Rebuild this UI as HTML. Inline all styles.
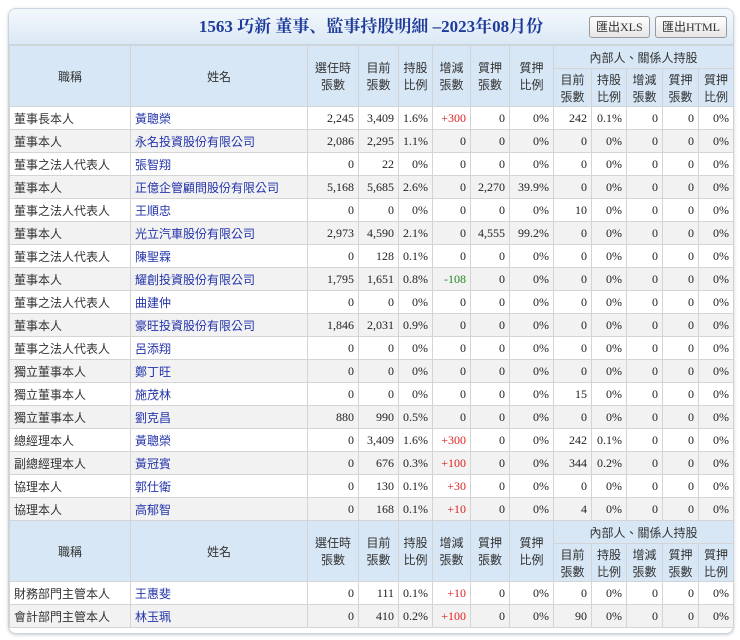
<!DOCTYPE html>
<html><head><meta charset="utf-8"><style>
body{margin:0;background:#fff;width:740px;height:640px;overflow:hidden;font-family:"Liberation Serif","Noto Sans CJK TC",serif;}
.panel{position:absolute;left:8px;top:8px;width:724px;height:624px;border:1px solid #c8d4e0;border-radius:8px;overflow:hidden;box-shadow:0 1px 3px #ccc;}
.title{height:35px;background:linear-gradient(#f4f8fc,#dae8f5);position:relative;border-bottom:1px solid #c8d4e0}
.title h1{margin:0;text-align:center;font-size:17px;line-height:35px;color:#1f3c9a;font-weight:bold;font-family:"Liberation Serif","Noto Serif CJK SC",serif;}
.btn{position:absolute;top:7px;height:20px;border:1px solid #999;border-radius:3px;background:linear-gradient(#fff,#e6e6e6);font-size:12px;line-height:20px;padding:0 6px;color:#333;font-family:"Liberation Serif","Noto Sans CJK TC",serif}
table{border-collapse:collapse;width:724px;table-layout:fixed;font-size:12px}
td,th{border:1px solid #d4d4d4;padding:0 4px;height:22px;white-space:nowrap;overflow:hidden}
th{background:#d7e7f5;font-weight:normal;color:#333;font-family:"Noto Sans CJK TC",sans-serif;font-size:12px;line-height:17px;text-align:center;padding:0 2px}
td{text-align:right;color:#222}
td.t{text-align:left;font-family:"Noto Sans CJK TC",sans-serif;color:#333}
td.n{text-align:left;font-family:"Noto Sans CJK TC",sans-serif;color:#2233aa}
tr.g td{background:#f2f2f2}
.r{color:#d22}.gr{color:#282}
</style></head><body>
<div class="panel">
<div class="title"><h1>1563 巧新 董事、監事持股明細 –2023年08月份</h1>
<span class="btn" style="left:580px">匯出XLS</span><span class="btn" style="left:646px">匯出HTML</span></div>
<table>
<colgroup><col style="width:121px"><col style="width:177px"><col style="width:51px"><col style="width:40px"><col style="width:34px"><col style="width:38px"><col style="width:39px"><col style="width:44px"><col style="width:38px"><col style="width:35px"><col style="width:36px"><col style="width:36px"><col style="width:35px"></colgroup>
<tr style="height:23px"><th rowspan="2">職稱</th><th rowspan="2">姓名</th><th rowspan="2">選任時<br>張數</th><th rowspan="2">目前<br>張數</th><th rowspan="2">持股<br>比例</th><th rowspan="2">增減<br>張數</th><th rowspan="2">質押<br>張數</th><th rowspan="2">質押<br>比例</th><th colspan="5">內部人、關係人持股</th></tr>
<tr style="height:38px"><th>目前<br>張數</th><th>持股<br>比例</th><th>增減<br>張數</th><th>質押<br>張數</th><th>質押<br>比例</th></tr>
<tr><td class="t">董事長本人</td><td class="n">黃聰榮</td><td>2,245</td><td>3,409</td><td>1.6%</td><td class="r">+300</td><td>0</td><td>0%</td><td>242</td><td>0.1%</td><td>0</td><td>0</td><td>0%</td></tr>
<tr class="g"><td class="t">董事本人</td><td class="n">永名投資股份有限公司</td><td>2,086</td><td>2,295</td><td>1.1%</td><td>0</td><td>0</td><td>0%</td><td>0</td><td>0%</td><td>0</td><td>0</td><td>0%</td></tr>
<tr><td class="t">董事之法人代表人</td><td class="n">張智翔</td><td>0</td><td>22</td><td>0%</td><td>0</td><td>0</td><td>0%</td><td>0</td><td>0%</td><td>0</td><td>0</td><td>0%</td></tr>
<tr class="g"><td class="t">董事本人</td><td class="n">正億企管顧問股份有限公司</td><td>5,168</td><td>5,685</td><td>2.6%</td><td>0</td><td>2,270</td><td>39.9%</td><td>0</td><td>0%</td><td>0</td><td>0</td><td>0%</td></tr>
<tr><td class="t">董事之法人代表人</td><td class="n">王順忠</td><td>0</td><td>0</td><td>0%</td><td>0</td><td>0</td><td>0%</td><td>10</td><td>0%</td><td>0</td><td>0</td><td>0%</td></tr>
<tr class="g"><td class="t">董事本人</td><td class="n">光立汽車股份有限公司</td><td>2,973</td><td>4,590</td><td>2.1%</td><td>0</td><td>4,555</td><td>99.2%</td><td>0</td><td>0%</td><td>0</td><td>0</td><td>0%</td></tr>
<tr><td class="t">董事之法人代表人</td><td class="n">陳聖霖</td><td>0</td><td>128</td><td>0.1%</td><td>0</td><td>0</td><td>0%</td><td>0</td><td>0%</td><td>0</td><td>0</td><td>0%</td></tr>
<tr class="g"><td class="t">董事本人</td><td class="n">耀創投資股份有限公司</td><td>1,795</td><td>1,651</td><td>0.8%</td><td class="gr">-108</td><td>0</td><td>0%</td><td>0</td><td>0%</td><td>0</td><td>0</td><td>0%</td></tr>
<tr><td class="t">董事之法人代表人</td><td class="n">曲建仲</td><td>0</td><td>0</td><td>0%</td><td>0</td><td>0</td><td>0%</td><td>0</td><td>0%</td><td>0</td><td>0</td><td>0%</td></tr>
<tr class="g"><td class="t">董事本人</td><td class="n">豪旺投資股份有限公司</td><td>1,846</td><td>2,031</td><td>0.9%</td><td>0</td><td>0</td><td>0%</td><td>0</td><td>0%</td><td>0</td><td>0</td><td>0%</td></tr>
<tr><td class="t">董事之法人代表人</td><td class="n">呂添翔</td><td>0</td><td>0</td><td>0%</td><td>0</td><td>0</td><td>0%</td><td>0</td><td>0%</td><td>0</td><td>0</td><td>0%</td></tr>
<tr class="g"><td class="t">獨立董事本人</td><td class="n">鄭丁旺</td><td>0</td><td>0</td><td>0%</td><td>0</td><td>0</td><td>0%</td><td>0</td><td>0%</td><td>0</td><td>0</td><td>0%</td></tr>
<tr><td class="t">獨立董事本人</td><td class="n">施茂林</td><td>0</td><td>0</td><td>0%</td><td>0</td><td>0</td><td>0%</td><td>15</td><td>0%</td><td>0</td><td>0</td><td>0%</td></tr>
<tr class="g"><td class="t">獨立董事本人</td><td class="n">劉克昌</td><td>880</td><td>990</td><td>0.5%</td><td>0</td><td>0</td><td>0%</td><td>0</td><td>0%</td><td>0</td><td>0</td><td>0%</td></tr>
<tr><td class="t">總經理本人</td><td class="n">黃聰榮</td><td>0</td><td>3,409</td><td>1.6%</td><td class="r">+300</td><td>0</td><td>0%</td><td>242</td><td>0.1%</td><td>0</td><td>0</td><td>0%</td></tr>
<tr class="g"><td class="t">副總經理本人</td><td class="n">黃冠賓</td><td>0</td><td>676</td><td>0.3%</td><td class="r">+100</td><td>0</td><td>0%</td><td>344</td><td>0.2%</td><td>0</td><td>0</td><td>0%</td></tr>
<tr><td class="t">協理本人</td><td class="n">郭仕衛</td><td>0</td><td>130</td><td>0.1%</td><td class="r">+30</td><td>0</td><td>0%</td><td>0</td><td>0%</td><td>0</td><td>0</td><td>0%</td></tr>
<tr class="g"><td class="t">協理本人</td><td class="n">高郁智</td><td>0</td><td>168</td><td>0.1%</td><td class="r">+10</td><td>0</td><td>0%</td><td>4</td><td>0%</td><td>0</td><td>0</td><td>0%</td></tr>
<tr style="height:23px"><th rowspan="2">職稱</th><th rowspan="2">姓名</th><th rowspan="2">選任時<br>張數</th><th rowspan="2">目前<br>張數</th><th rowspan="2">持股<br>比例</th><th rowspan="2">增減<br>張數</th><th rowspan="2">質押<br>張數</th><th rowspan="2">質押<br>比例</th><th colspan="5">內部人、關係人持股</th></tr>
<tr style="height:38px"><th>目前<br>張數</th><th>持股<br>比例</th><th>增減<br>張數</th><th>質押<br>張數</th><th>質押<br>比例</th></tr>
<tr><td class="t">財務部門主管本人</td><td class="n">王惠斐</td><td>0</td><td>111</td><td>0.1%</td><td class="r">+10</td><td>0</td><td>0%</td><td>0</td><td>0%</td><td>0</td><td>0</td><td>0%</td></tr>
<tr class="g"><td class="t">會計部門主管本人</td><td class="n">林玉珮</td><td>0</td><td>410</td><td>0.2%</td><td class="r">+100</td><td>0</td><td>0%</td><td>90</td><td>0%</td><td>0</td><td>0</td><td>0%</td></tr>
</table>
</div>
</body></html>
